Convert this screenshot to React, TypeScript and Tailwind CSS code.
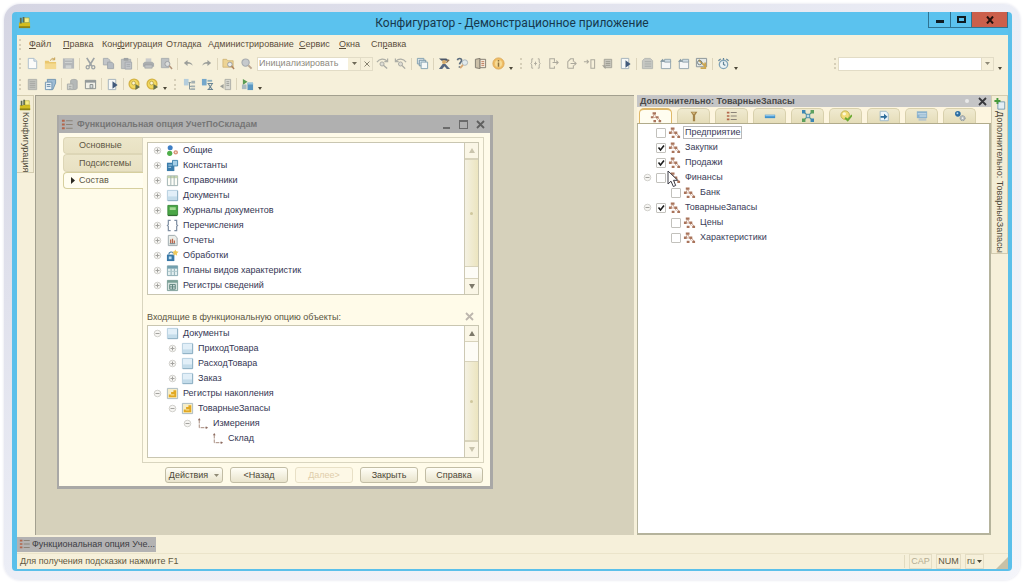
import { useState, type ReactNode } from "react";

const glyphs: Record<string, ReactNode> = {
  app: (
    <>
      <path d="M1 7h12v6H1z" fill="#d3bd1f" />
      <path d="M1 11h12v2H1z" fill="#8d8417" />
      <path d="M2 2h2v6H2zM5 1h2v6H5z" fill="#5a6a52" />
      <path d="M7 2h5v5H7z" fill="#f6ee8a" stroke="#a79a1d" strokeWidth=".6" />
    </>
  ),
  newDoc: (
    <>
      <path d="M2.500 1.500h6l3 3v8h-9z" fill="#fdfeff" stroke="#9fb4c8" />
      <path d="M8.500 1.500v3h3" fill="#dce8f2" stroke="#9fb4c8" />
    </>
  ),
  open: (
    <>
      <path d="M1 4h4l1 1.500h7V13H1z" fill="#e8c15c" />
      <path d="M1 7h12v6H1z" fill="#f4d682" />
      <path d="M7 4c1-3 3-3 4-1.500M11.500 .5v2.500H9" fill="none" stroke="#b98a2c" />
    </>
  ),
  save: (
    <>
      <path d="M1 1.500h12v11H1z" fill="#a9aeb4" />
      <path d="M3 2.500h8v4H3zM4 9h6v3.500H4z" fill="#c9cdd0" />
      <path d="M3 4.500h8" stroke="#949aa1" />
    </>
  ),
  cut: (
    <>
      <path d="M3 1l5.500 9M11 1L5.500 10" stroke="#8f979d" strokeWidth="1.800" />
      <circle cx="4" cy="11" r="1.700" fill="none" stroke="#8f979d" strokeWidth="1.400" />
      <circle cx="10" cy="11" r="1.700" fill="none" stroke="#8f979d" strokeWidth="1.400" />
    </>
  ),
  copy: (
    <>
      <path d="M1.500 1.500h5l2 2v5h-7z" fill="#b9bec6" stroke="#9ba2aa" />
      <path d="M6 5.500h4.500l2 2v5H6z" fill="#aab2bd" stroke="#9299a3" />
    </>
  ),
  paste: (
    <>
      <path d="M1.500 2.500h10v10h-10z" fill="#b4b8bd" stroke="#a0a5aa" />
      <path d="M4 1h5v3H4z" fill="#8f959b" />
      <path d="M5.500 5.500h7v7.500h-7z" fill="#b9bec6" stroke="#979da6" />
      <path d="M7 8h4M7 10h4" stroke="#979da6" />
    </>
  ),
  print: (
    <>
      <path d="M4 1.500h6V6H4z" fill="#c3c6ca" />
      <path d="M3 5h8l2 2v3.500H1V7z" fill="#9da2a8" />
      <path d="M3 8.500h8V12H3z" fill="#b7bbc0" stroke="#868c93" strokeWidth=".7" />
    </>
  ),
  preview: (
    <>
      <path d="M1.500 1.500h8v10h-8z" fill="#b4b9c0" stroke="#9da3a9" />
      <circle cx="8" cy="7.500" r="2.700" fill="#d7dadc" stroke="#8c9299" />
      <path d="M10 9.500l3 3.500" stroke="#a9876c" strokeWidth="1.600" />
    </>
  ),
  undo: (
    <path d="M2 6.500l4-3.200v2c3 0 5 1.200 5.500 4.200-1.500-1.800-3-2.200-5.500-2.100v2.300z" fill="#8c908f" />
  ),
  redo: (
    <path d="M12 6.500L8 3.300v2c-3 0-5 1.200-5.500 4.200C4 7.700 5.500 7.300 8 7.400v2.300z" fill="#8c908f" />
  ),
  findFolder: (
    <>
      <path d="M1 2.500h4l1 1.500h6v7H1z" fill="#ecd08a" stroke="#c5a35a" strokeWidth=".8" />
      <circle cx="8.500" cy="8" r="2.500" fill="#e9ecef" stroke="#8f8f8f" />
      <path d="M10.300 9.800l2.700 3" stroke="#a3714a" strokeWidth="1.600" />
    </>
  ),
  search: (
    <>
      <circle cx="6" cy="6" r="3.900" fill="#bec3ca" stroke="#9aa0a8" strokeWidth="1.200" />
      <path d="M9 9l3.500 3.500" stroke="#b09882" strokeWidth="2" />
    </>
  ),
  findNext: (
    <>
      <path d="M1 5.500C4 1.500 9 1.500 12 4.500M12.500 1.500v3.500H9" fill="none" stroke="#a1a39d" strokeWidth="1.300" />
      <circle cx="6.500" cy="7.500" r="2.200" fill="#d9d9d2" stroke="#9b9d99" />
      <path d="M8 9l4 3.500" stroke="#9b9d99" strokeWidth="1.400" />
    </>
  ),
  findPrev: (
    <>
      <path d="M13 5.500C10 1.500 5 1.500 2 4.500M1.500 1.500v3.500H5" fill="none" stroke="#a1a39d" strokeWidth="1.300" />
      <circle cx="7" cy="7.500" r="2.200" fill="#d9d9d2" stroke="#9b9d99" />
      <path d="M8.500 9l3.500 3.500" stroke="#9b9d99" strokeWidth="1.400" />
    </>
  ),
  windows: (
    <>
      <path d="M1.500 1.500h7v6h-7z" fill="#dfe9ef" stroke="#6f94aa" />
      <path d="M3.500 3.500h7v6h-7z" fill="#cfe2ee" stroke="#5b8097" />
      <path d="M5.500 5.500h7v7h-7z" fill="#f5fafd" stroke="#6f94aa" />
    </>
  ),
  syntax: (
    <>
      <path d="M1 1.500h8l3 2.500H4z" fill="#2f3d55" />
      <circle cx="6.500" cy="5.500" r="2.200" fill="#d3a25a" />
      <path d="M1 13l4-5.500h3l5 5.500h-3.500L7 10l-2.500 3z" fill="#3d5170" />
      <path d="M9 6l3-3" stroke="#7a5630" strokeWidth="1.300" />
    </>
  ),
  helpFind: (
    <>
      <path d="M1.500 3.500C2 1 6 1 6 3.500S4 5.500 3.800 8M3.800 10v1.500" fill="none" stroke="#41566f" strokeWidth="1.800" />
      <circle cx="9.500" cy="6" r="3" fill="#dfeaf0" stroke="#9aa9b3" />
      <path d="M7.500 8.500L4.500 12" stroke="#d39b60" strokeWidth="1.800" />
    </>
  ),
  book: (
    <>
      <path d="M1.500 2.500l5-1v11l-5-1z" fill="#c4b8a0" stroke="#6b665c" />
      <path d="M6.500 2.500h6v9h-6z" fill="#f4ead9" stroke="#6b665c" />
      <path d="M8 5h3M8 7h3M8 9h3" stroke="#b56646" />
    </>
  ),
  info: (
    <>
      <circle cx="7" cy="7" r="6" fill="#f0b652" stroke="#d79a3c" />
      <circle cx="7" cy="7" r="3.800" fill="#f8d888" />
      <path d="M7 6v4.500M7 3.200v1.600" stroke="#7b5a22" strokeWidth="1.600" />
    </>
  ),
  stepBraces: (
    <path d="M4.500 2H3v3.500L2 7l1 1.500V12h1.500M9.500 2H11v3.500L12 7l-1 1.500V12H9.500M7 5v4M5.500 7h3" fill="none" stroke="#a09d92" />
  ),
  stepOver: (
    <path d="M8 4V2H3v10h5v-2M8 5V2M6 6h6M10 4l2 2-2 2" fill="none" stroke="#a09d92" strokeWidth="1.100" />
  ),
  stepOut: (
    <path d="M3 12V5l3-3h3v3M3 12h6V9M6 7h6M10 5l2 2-2 2" fill="none" stroke="#a09d92" strokeWidth="1.100" />
  ),
  stepTo: (
    <path d="M1 5h5M4 3l2 2-2 2M8.500 3h4v9h-4z" fill="none" stroke="#a09d92" strokeWidth="1.100" />
  ),
  stack: (
    <>
      <path d="M3.500 2.500h8v9h-8z" fill="#c2c1b9" stroke="#97968e" />
      <path d="M5 5h5M5 7h5M5 9h5" stroke="#8b8a83" />
      <path d="M1 9h4v4z" fill="#97968e" />
    </>
  ),
  play: (
    <>
      <path d="M2.500 1.500h8v11h-8z" fill="#f7fafc" stroke="#93a6b6" />
      <path d="M7 3.500l5.500 4-5.500 4z" fill="#22406b" />
    </>
  ),
  table: (
    <>
      <path d="M4 1.500h6l2.500 2.500v8.500h-11V4z" fill="#bfc2c0" stroke="#a9adab" />
      <path d="M4 5h7M4 7.500h7M4 10h7" stroke="#9da2a2" />
    </>
  ),
  winBack: (
    <>
      <path d="M2.500 4.500h10v8h-10z" fill="#f5f9fb" stroke="#8197a5" />
      <path d="M6 2.500h6.500v3H6z" fill="#c9dae5" stroke="#8197a5" />
      <path d="M1 5l3-3 2 3" fill="#6d8798" />
    </>
  ),
  measure: (
    <>
      <path d="M1.500 1.500h11v9h-11z" fill="#e1e7e8" stroke="#75828a" />
      <path d="M4 3l8 8M11 6v6H6" fill="none" stroke="#c59a38" strokeWidth="2" />
      <circle cx="5" cy="6" r="2.300" fill="none" stroke="#596a72" />
    </>
  ),
  clock: (
    <>
      <circle cx="7" cy="8" r="4.500" fill="#eaf3f8" stroke="#6c96b2" strokeWidth="1.400" />
      <path d="M7 5v3l2 1M1.500 4l2.500-2M12.500 4L10 2M7 1v2" fill="none" stroke="#45708e" strokeWidth="1.300" />
    </>
  ),
  list: (
    <>
      <path d="M2.500 1.500h9v11h-9z" fill="#b9bcb9" stroke="#a3a7a5" />
      <path d="M4 4h6M4 6h6M4 8h6M4 10h6" stroke="#989d9b" />
    </>
  ),
  form: (
    <>
      <path d="M3.500 1.500h9v4l-3 7h-4z" fill="#8fb4d3" stroke="#5a86ab" />
      <path d="M1.500 4.500h7v8h-7z" fill="#e6f0f8" stroke="#5a86ab" />
      <path d="M3 7h4M3 9h4" stroke="#47749c" />
    </>
  ),
  dbBack: (
    <>
      <path d="M5 3c0-2 7-2 7 0v8c0 2-7 2-7 0z" fill="#a9afb2" stroke="#9a9fa0" />
      <path d="M1.500 6.500h6v6h-6z" fill="#cfd2d0" stroke="#9a9fa0" />
      <path d="M3 9h3M3 11h3" stroke="#8f9596" />
    </>
  ),
  formGray: (
    <>
      <path d="M1.500 2.500h11v9h-11z" fill="#f1f1ea" stroke="#757c7e" />
      <path d="M1 2.500h12v2.500H1z" fill="#828b90" />
      <path d="M6.500 7h3v4h-3z" fill="#cfd8dd" stroke="#757c7e" />
    </>
  ),
  goldPlay: (
    <>
      <circle cx="6.500" cy="6.500" r="5.300" fill="#f3d548" stroke="#cfa92a" strokeWidth="1.400" />
      <circle cx="6" cy="5.500" r="2" fill="#fdf7cf" stroke="#a48c24" strokeWidth=".8" />
      <path d="M8 6.500l5 3.300L8 13z" fill="#4f5b33" />
    </>
  ),
  treeBlue: (
    <>
      <path d="M1 1h5v7H1z" fill="#a9c8dd" />
      <path d="M6 5h3M7 5v7h3M7 9h3" fill="none" stroke="#68808c" />
      <path d="M9 3h4v3H9zM9 8h4v2H9zM9 11h4v2H9z" fill="#96a6ac" />
    </>
  ),
  treeBlue2: (
    <>
      <path d="M1 1h5v7H1z" fill="#5f9cc9" />
      <path d="M7 6h6M7 12.500h6M8 6.500l4 6M12 6.500l-4 6" fill="none" stroke="#527388" strokeWidth="1.100" />
      <path d="M7 2h5v2H7z" fill="#7da4b7" />
    </>
  ),
  back: (
    <>
      <path d="M6.500 1.500h6v11h-6z" fill="#d5d6d0" stroke="#a0a39f" />
      <path d="M8 4h3M8 6h3M8 8h3" stroke="#8d918e" />
      <path d="M1 9l4-2.500v5z" fill="#8d918e" />
    </>
  ),
  dbGreen: (
    <>
      <path d="M2 1l5 3-5 3.500z" fill="#3f8d3b" />
      <path d="M1 7h5v5H1z" fill="#9db1bd" />
      <path d="M7 5h6v8H7z" fill="#3f88bd" />
      <path d="M7 5h6v2H7z" fill="#8cc0e0" />
    </>
  ),
  options: (
    <>
      <path d="M1 2h3v2H1zM1 6h3v2H1zM1 10h3v2H1z" fill="#b3664b" />
      <path d="M5.500 3h7M5.500 7h7M5.500 11h7" stroke="#8b8378" strokeWidth="1.200" />
    </>
  ),
  common: (
    <>
      <circle cx="4.500" cy="4" r="2.700" fill="#3f7fc4" />
      <circle cx="4" cy="10" r="2.800" fill="#4fae4a" />
      <circle cx="10.500" cy="9" r="2.400" fill="#d89277" />
      <circle cx="10.500" cy="9" r="1" fill="#f6e3da" />
    </>
  ),
  constant: (
    <>
      <path d="M1 4h8v9H1z" fill="#3b7cab" />
      <path d="M2.500 6.500h5M2.500 9h3" stroke="#b6d9ee" />
      <path d="M7 1.500h5.500v6H7z" fill="#a6d0e8" stroke="#4385ae" />
    </>
  ),
  catalog: (
    <>
      <path d="M1.500 2h11v10.500h-11z" fill="#fdfdf7" stroke="#9db0b0" />
      <path d="M1.500 2h11v2.500h-11z" fill="#c5d3ae" />
      <path d="M5.200 2v10M8.800 2v10" stroke="#9db0b0" />
    </>
  ),
  document: (
    <>
      <path d="M1.500 1.500h11v11h-11z" fill="#e2eff8" stroke="#b3cddd" />
      <path d="M2 8h10v4H2z" fill="#c4dcea" />
      <path d="M12.500 2v10.500H2" fill="none" stroke="#8badc0" />
    </>
  ),
  journal: (
    <>
      <path d="M2 1.500h10.500V12H2z" fill="#4aa646" stroke="#3b8a3b" />
      <path d="M4 3.500h6.500v3H4z" fill="#a5d894" />
      <path d="M2 12.500h10" stroke="#245c26" />
    </>
  ),
  enumeration: (
    <path d="M5 1.500H2.500V6L1.500 7l1 1v4.500H5M9 1.500h2.500V6l1 1-1 1v4.500H9" fill="none" stroke="#7e8ea2" strokeWidth="1.300" />
  ),
  report: (
    <>
      <path d="M2.500 1.500h7l2.500 2.500v8.500H2.500z" fill="#eceee9" stroke="#9ca8ac" />
      <path d="M5 10V6M7 10V5M9 10V7" stroke="#b7664d" strokeWidth="1.300" />
      <path d="M4 10.500h6" stroke="#5e7480" />
    </>
  ),
  processing: (
    <>
      <path d="M1 6h8v7H1z" fill="#3878a8" />
      <path d="M3 8h3v3H3z" fill="#b7dcf2" />
      <path d="M3 6c0-3 4-4 5-1" fill="none" stroke="#447ca2" strokeWidth="1.200" />
      <path d="M10 .5l1 2 2.500.5-1.800 1.800.3 2.400L10 6l-2 1 .3-2.200L6.800 3l2.200-.5z" fill="#f0c95a" />
    </>
  ),
  plan: (
    <>
      <path d="M1.500 2h11v10.500h-11z" fill="#e3eff0" stroke="#86a8b0" />
      <path d="M1.500 2h11v3h-11z" fill="#73a0ae" />
      <path d="M5.500 5v7M9 5v7" stroke="#86a8b0" />
      <path d="M2 8h10" stroke="#b0c8cc" />
    </>
  ),
  register: (
    <>
      <path d="M1.500 1.500h11v11h-11z" fill="#d5e2de" stroke="#7b9d96" />
      <path d="M1.500 1.500h11v2.500h-11z" fill="#7ba197" />
      <path d="M4 6h6v5H4zM7 6v5M4 8.500h6" fill="none" stroke="#5d837c" />
    </>
  ),
  accumulation: (
    <>
      <path d="M1.500 1.500h11v11h-11z" fill="#f6edc8" stroke="#a9bac0" />
      <path d="M3 11V8h2.500V5.500H8V3.500h3V11z" fill="#e2a923" />
      <path d="M5 8.500h4" stroke="#fff0b5" />
    </>
  ),
  dimension: (
    <>
      <path d="M3.500 3v8.500H12" fill="none" stroke="#a08274" strokeWidth="1" strokeDasharray="4 1" />
      <path d="M2 3.500L3.500 1 5 3.500zM10.500 10L13 11.500 10.500 13z" fill="#8d6b60" />
    </>
  ),
  subsystem: (
    <>
      <path d="M5 3.500l4 7M4.500 4l-1 3M4 7.500h4M8.500 7L12 11" fill="none" stroke="#c9a08c" />
      <path d="M3 1.500h4v2.500H3zM1 6h3v2.500H1zM7 6h3v2.500H7zM4 10.500h3V13H4zM10 10.500h3V13h-3z" fill="#a9745b" />
    </>
  ),
  filter: (
    <>
      <path d="M3 2h8L8.300 6v7H5.700V6z" fill="#a58449" />
      <path d="M4.500 3h4L7 5z" fill="#e0c58a" />
    </>
  ),
  minus: (
    <>
      <path d="M1 5.500h12v4H1z" fill="#3e91cc" />
      <path d="M1.500 6h11v1.300h-11z" fill="#9ed0ef" />
    </>
  ),
  network: (
    <>
      <path d="M3 3l8 8M11 3l-8 8" stroke="#4f8f89" strokeWidth="1.200" />
      <path d="M0 0h4v4H0zM10 10h4v4h-4z" fill="#3c86b5" />
      <path d="M10 0h4v4h-4zM0 10h4v4H0z" fill="#5ca05e" />
      <path d="M5 5h4v4H5z" fill="#bddbe4" stroke="#4386a6" />
    </>
  ),
  globe: (
    <>
      <circle cx="6" cy="6" r="5" fill="#f2dc78" stroke="#bcae4d" />
      <circle cx="5" cy="4.500" r="2" fill="#fdf8d5" />
      <path d="M6 9l3 3 5-6" fill="none" stroke="#6caa32" strokeWidth="2.200" />
    </>
  ),
  docArrow: (
    <>
      <path d="M2.500 1.500h7l2.500 3v8H2.500z" fill="#eef5f9" stroke="#98b4c4" />
      <path d="M3 7h4V4.500L11 8l-4 3.500V9H3z" fill="#2d6c9b" />
    </>
  ),
  panel: (
    <>
      <path d="M1 1.500h12v8H1z" fill="#8bb2cd" />
      <path d="M2 4.500h10M4 7h8" stroke="#e4eff5" />
      <path d="M3 9.500h9v3H3z" fill="#b9c6cb" />
    </>
  ),
  gears: (
    <>
      <circle cx="4.500" cy="4.500" r="3.300" fill="#2e6ea2" />
      <circle cx="4" cy="3.800" r="1.100" fill="#b7daf0" />
      <circle cx="10" cy="9.500" r="3" fill="#b3b9bb" stroke="#889197" strokeDasharray="1.500 1" />
      <circle cx="10" cy="9.500" r="1" fill="#f3f3ee" />
    </>
  ),
  addPage: (
    <>
      <path d="M4.500 4.500h8v8.500h-8z" fill="#e3eef4" stroke="#6c93ab" />
      <path d="M4 0v7M.5 3.500h7" stroke="#459a3c" strokeWidth="2.200" />
    </>
  ),
};

function Icon({ name, small = false }: { name: string; small?: boolean }) {
  return (
    <svg viewBox="0 0 14 14" aria-hidden="true" className={small ? "h-3 w-3 shrink-0" : "h-[13px] w-[13px] shrink-0"}>
      {glyphs[name]}
    </svg>
  );
}

function Tool({ name, label }: { name: string; label: string }) {
  return (
    <button type="button" aria-label={label} className="flex h-[18px] w-[18px] shrink-0 items-center justify-center opacity-85">
      <Icon name={name} />
    </button>
  );
}

const Sep = () => (
  <span className="flex w-1 shrink-0 justify-center">
    <span className="h-3 w-px bg-[#dcd4bb]" />
  </span>
);

const Grip = ({ wide = false }: { wide?: boolean }) => (
  <span className={wide ? "flex w-[11px] shrink-0 justify-end pr-1" : "flex w-[6px] shrink-0 justify-center"}>
    <span className="h-[11px] border-l-2 border-dotted border-[#d6cfb8]" />
  </span>
);

const More = () => (
  <button type="button" aria-label="Другие кнопки" className="flex h-[12px] w-2 shrink-0 items-end justify-center">
    <svg viewBox="0 0 4 3" className="h-[3px] w-1" aria-hidden="true">
      <path d="M0 0h4L2 3z" fill="#4d4838" />
    </svg>
  </button>
);

type Entry = string | [string, string];

function Tools({ items }: { items: Entry[] }) {
  return (
    <>
      {items.map((item, i) =>
        item === "|" ? (
          <Sep key={i} />
        ) : item === "." ? (
          <More key={i} />
        ) : item === ":" ? (
          <Grip key={i} wide />
        ) : (
          <Tool key={i} name={item[0]} label={item[1]} />
        ),
      )}
    </>
  );
}

const fileTools: Entry[] = [
  ["newDoc", "Новый"], ["open", "Открыть"], ["save", "Сохранить"], "|",
  ["cut", "Вырезать"], ["copy", "Копировать"], ["paste", "Вставить"], "|",
  ["print", "Печать"], ["preview", "Просмотр"], "|",
  ["undo", "Отменить"], ["redo", "Вернуть"], "|",
  ["findFolder", "Глобальный поиск"], ["search", "Найти"],
];

const debugTools: Entry[] = [
  ["findNext", "Найти следующий"], ["findPrev", "Найти предыдущий"], "|",
  ["windows", "Окна"], "|",
  ["syntax", "Синтаксис-помощник"], ["helpFind", "Поиск в справке"], ["book", "Справка"], ["info", "О программе"], ".", ":",
  ["stepBraces", "Шагнуть в"], ["stepOver", "Шагнуть через"], ["stepOut", "Шагнуть из"], ["stepTo", "Идти до курсора"],
  ["stack", "Стек вызовов"], ["play", "Продолжить"], "|",
  ["table", "Табло"], ["winBack", "Назад"], ["winBack", "Вперёд"], ["measure", "Замер"], "|", ["clock", "Время"], ".",
];

const configTools: Entry[] = [
  ["list", "Список"], ["form", "Форма"], "|",
  ["dbBack", "База данных"], ["formGray", "Окно"], "|",
  ["play", "Запуск"], "|",
  ["goldPlay", "Отладка"], ["goldPlay", "Предприятие"], ".", ":",
  ["treeBlue", "Конфигурация"], ["treeBlue2", "Закрыть конфигурацию"], ["back", "Вернуться"], "|",
  ["dbGreen", "Обновить базу данных"], ".",
];

const menu: [string, string, string, string][] = [
  ["", "Ф", "айл", "w-[34px]"],
  ["", "П", "равка", "w-[39px]"],
  ["Кон", "ф", "игурация", "w-[64px]"],
  ["Отладка", "", "", "w-[42px]"],
  ["Администрирование", "", "", "w-[91px]"],
  ["", "С", "ервис", "w-[40px]"],
  ["", "О", "кна", "w-[32px]"],
  ["Сп", "р", "авка", "w-[40px]"],
];

const indents = ["pl-0", "pl-[15px]", "pl-[30px]", "pl-[45px]"];

function Expander({ sign, label }: { sign?: "+" | "-"; label: string }) {
  if (!sign) return <span className="w-[9px] shrink-0" />;
  return (
    <button type="button" aria-label={label} className="h-[9px] w-[9px] shrink-0">
      <svg viewBox="0 0 9 9" className="h-[9px] w-[9px]" aria-hidden="true">
        <circle cx="4.500" cy="4.500" r="3.300" fill="#f6f5f2" stroke="#d2d1cd" />
        <path d={sign === "+" ? "M2.500 4.500h4M4.500 2.500v4" : "M2.500 4.500h4"} stroke="#a3a29f" />
      </svg>
    </button>
  );
}

type Row = { text: string; icon: string; level: number; sign?: "+" | "-" };

function ObjectTree({ rows }: { rows: Row[] }) {
  return (
    <ul className="min-w-0 flex-1 overflow-hidden pl-[5px]">
      {rows.map((r) => (
        <li key={r.text} className={"flex h-[15px] items-center whitespace-nowrap text-[#343653] " + indents[r.level]}>
          <Expander sign={r.sign} label={r.text} />
          <span className="ml-1 flex w-[17px] shrink-0 items-center">
            <Icon name={r.icon} />
          </span>
          {r.text}
        </li>
      ))}
    </ul>
  );
}

const objects: Row[] = [
  { text: "Общие", icon: "common", level: 0, sign: "+" },
  { text: "Константы", icon: "constant", level: 0, sign: "+" },
  { text: "Справочники", icon: "catalog", level: 0, sign: "+" },
  { text: "Документы", icon: "document", level: 0, sign: "+" },
  { text: "Журналы документов", icon: "journal", level: 0, sign: "+" },
  { text: "Перечисления", icon: "enumeration", level: 0, sign: "+" },
  { text: "Отчеты", icon: "report", level: 0, sign: "+" },
  { text: "Обработки", icon: "processing", level: 0, sign: "+" },
  { text: "Планы видов характеристик", icon: "plan", level: 0, sign: "+" },
  { text: "Регистры сведений", icon: "register", level: 0, sign: "+" },
];

const included: Row[] = [
  { text: "Документы", icon: "document", level: 0, sign: "-" },
  { text: "ПриходТовара", icon: "document", level: 1, sign: "+" },
  { text: "РасходТовара", icon: "document", level: 1, sign: "+" },
  { text: "Заказ", icon: "document", level: 1, sign: "+" },
  { text: "Регистры накопления", icon: "accumulation", level: 0, sign: "-" },
  { text: "ТоварныеЗапасы", icon: "accumulation", level: 1, sign: "-" },
  { text: "Измерения", icon: "dimension", level: 2, sign: "-" },
  { text: "Склад", icon: "dimension", level: 3 },
];

function Arrow({ up = false, muted = false }: { up?: boolean; muted?: boolean }) {
  return (
    <svg viewBox="0 0 6 5" className="h-[5px] w-[6px]" aria-hidden="true">
      <path d={up ? "M0 5h6L3 0z" : "M0 0h6L3 5z"} fill={muted ? "#c9c4ad" : "#7d796a"} />
    </svg>
  );
}

function ScrollBar({ atEnd }: { atEnd: boolean }) {
  const gap = <span className={atEnd ? "h-[11px] bg-[#fdfcf6]" : "h-[19px] bg-[#fdfcf6]"} />;
  return (
    <div className="flex w-[14px] shrink-0 flex-col border-l border-[#cdc9b4]">
      <button type="button" aria-label="Вверх" className="flex h-4 items-center justify-center border-b border-[#d8d3bb] bg-[#faf6e6]">
        <Arrow up muted={atEnd} />
      </button>
      {!atEnd && gap}
      <span className="flex flex-1 items-center justify-center border-y border-[#d8d3bb] bg-linear-to-r from-[#f4f1e2] to-[#ece5bf]">
        <span className="h-[3px] w-[3px] rounded-full bg-[#cfc79d]" />
      </span>
      {atEnd && gap}
      <button type="button" aria-label="Вниз" className="flex h-4 items-center justify-center border-t border-[#d8d3bb] bg-[#faf6e6]">
        <Arrow muted={!atEnd} />
      </button>
    </div>
  );
}

const Cross = ({ tone }: { tone: string }) => (
  <svg viewBox="0 0 9 9" className={"h-[9px] w-[9px] " + tone} aria-hidden="true">
    <path d="M1 1l7 7M8 1L1 8" stroke="currentColor" strokeWidth="1.800" />
  </svg>
);

const buttonBase = "flex h-4 w-[58px] items-center justify-center rounded-[3px] border ";

function DialogButton({ text, off = false, menu = false }: { text: string; off?: boolean; menu?: boolean }) {
  return (
    <button
      type="button"
      disabled={off}
      className={
        buttonBase +
        (off
          ? "border-[#e8e0c6] bg-[#fdf8e6] text-[#dfcdaa]"
          : "border-[#c2bda5] bg-linear-to-b from-[#fffef6] to-[#e9e4cd] text-[#4d4736]")
      }
    >
      {text}
      {menu && (
        <svg viewBox="0 0 5 3" className="ml-[6px] h-[3px] w-[5px]" aria-hidden="true">
          <path d="M0 0h5L2.500 3z" fill="#8f8a75" />
        </svg>
      )}
    </button>
  );
}

function OptionWindow() {
  return (
    <section className="absolute top-[19px] left-[21px] flex w-[436px] flex-col border-r-[3px] border-b-[3px] border-l-2 border-[#a9a8a6] bg-[#fffbe9]">
      <header className="flex h-[18px] items-center bg-[#b0b0b0] pr-[5px] pl-[2px]">
        <Icon name="options" />
        <h2 className="ml-[3px] flex-1 text-[9px] font-bold text-[#767676]">Функциональная опция УчетПоСкладам</h2>
        <button type="button" aria-label="Свернуть" className="mr-[9px] flex h-[9px] w-[7px] items-end">
          <span className="h-[2px] w-[7px] bg-[#6b6b6b]" />
        </button>
        <button type="button" aria-label="Развернуть" className="mr-[8px] h-[9px] w-[9px] border border-t-2 border-[#6b6b6b]" />
        <button type="button" aria-label="Закрыть окно">
          <Cross tone="text-[#5f5f5f]" />
        </button>
      </header>
      <div className="flex pt-[4px] pr-[6px] pl-[4px]">
        <nav className="flex w-[79px] shrink-0 flex-col text-[#5d5643]">
          <button type="button" className="h-[17px] rounded-l-[4px] border border-r-0 border-[#ddd6b6] bg-linear-to-b from-[#ece6ca] to-[#e8e1c2] pl-[15px] text-left">
            Основные
          </button>
          <button type="button" className="h-[18px] rounded-l-[4px] border border-r-0 border-[#ddd6b6] bg-linear-to-b from-[#ece6ca] to-[#e8e1c2] pl-[15px] text-left">
            Подсистемы
          </button>
          <button type="button" className="z-10 -mr-px flex h-[17px] items-center rounded-l-[4px] border border-r-0 border-[#d6cf9f] bg-[#fffdf0] pl-[7px]">
            <svg viewBox="0 0 4 7" className="mr-1 h-[7px] w-1" aria-hidden="true">
              <path d="M0 0v7l4-3.500z" fill="#2c2a22" />
            </svg>
            Состав
          </button>
        </nav>
        <div className="flex min-w-0 flex-1 flex-col border border-[#d9d5bf] p-1">
          <div className="flex h-[153px] border border-[#c9c6b1] bg-white">
            <ObjectTree rows={objects} />
            <ScrollBar atEnd />
          </div>
          <div className="flex h-[30px] items-end justify-between pr-[5px] pb-[2px] text-[#5a5441]">
            <h3 className="leading-[11px]">Входящие в функциональную опцию объекты:</h3>
            <button type="button" aria-label="Убрать объект" className="pb-[2px]">
              <Cross tone="text-[#bdb6ae]" />
            </button>
          </div>
          <div className="flex h-[133px] border border-[#c9c6b1] bg-white">
            <ObjectTree rows={included} />
            <ScrollBar atEnd={false} />
          </div>
        </div>
      </div>
      <footer className="flex justify-end gap-[7px] pt-[4px] pr-[7px] pb-[3px]">
        <DialogButton text="Действия" menu />
        <DialogButton text="<Назад" />
        <DialogButton text="Далее>" off />
        <DialogButton text="Закрыть" />
        <DialogButton text="Справка" />
      </footer>
    </section>
  );
}

const panelTabs: [string, string][] = [
  ["subsystem", "Подсистемы"], ["filter", "Отбор"], ["options", "Функциональные опции"],
  ["minus", "Реквизиты"], ["network", "Планы обмена"], ["globe", "Права"],
  ["docArrow", "Ввод на основании"], ["panel", "Командный интерфейс"], ["gears", "Регламент"],
];

type Subsystem = { text: string; level: number; checked: boolean; open?: boolean };

const subsystems: Subsystem[] = [
  { text: "Предприятие", level: 0, checked: false },
  { text: "Закупки", level: 0, checked: true },
  { text: "Продажи", level: 0, checked: true },
  { text: "Финансы", level: 0, checked: false, open: true },
  { text: "Банк", level: 1, checked: false },
  { text: "ТоварныеЗапасы", level: 0, checked: true, open: true },
  { text: "Цены", level: 1, checked: false },
  { text: "Характеристики", level: 1, checked: false },
];

function SubsystemRow({ item, first }: { item: Subsystem; first: boolean }) {
  const [on, setOn] = useState(item.checked);
  return (
    <li className={"relative flex h-[15px] items-center " + indents[item.level]}>
      <Expander sign={item.open ? "-" : undefined} label={item.text} />
      <label className="ml-1 flex items-center whitespace-nowrap text-[#3a3c58]">
        <span className="relative h-[10px] w-[10px]">
          <input
            type="checkbox"
            checked={on}
            onChange={() => setOn(!on)}
            className="block h-[10px] w-[10px] appearance-none rounded-[1px] border border-[#c2c1bc] bg-white"
          />
          {on && (
            <svg viewBox="0 0 10 10" className="pointer-events-none absolute inset-0" aria-hidden="true">
              <path d="M2.500 4.500l2 2.500 3.500-4.500" fill="none" stroke="#1d1d1d" strokeWidth="1.600" />
            </svg>
          )}
        </span>
        <span className="ml-[2px] flex w-[15px] items-center">
          <Icon name="subsystem" />
        </span>
        <span className={first ? "border border-[#b9b9b9] px-px leading-[11px]" : "px-[2px]"}>{item.text}</span>
      </label>
      {item.text === "Финансы" && (
        <svg viewBox="0 0 12 18" className="pointer-events-none absolute top-0 left-[24px] z-10 h-[18px] w-3" aria-hidden="true">
          <path d="M1 1v13l3-2.800 2.300 5.300 2.400-1L6.500 10.300h4.200z" fill="#fff" stroke="#3b3b44" />
        </svg>
      )}
    </li>
  );
}

function SidePanel() {
  return (
    <aside className="flex w-[354px] shrink-0 flex-col bg-[#fdf5df]">
      <header className="flex h-[12px] items-center bg-[#c5c5c6] pr-[4px] pl-[3px]">
        <h2 className="flex-1 leading-[12px] font-bold text-[#494949]">Дополнительно: ТоварныеЗапасы</h2>
        <span className="mr-[9px] h-1 w-1 rounded-full bg-[#e9e9e9]" />
        <button type="button" aria-label="Закрыть панель">
          <Cross tone="text-[#38383c]" />
        </button>
      </header>
      <nav className="flex gap-[5px] border-b border-[#b1ab8b] pt-px pl-[2px]">
        {panelTabs.map(([icon, label], i) => (
          <button
            key={icon}
            type="button"
            aria-label={label}
            className={
              "flex h-[15px] w-[33px] items-center justify-center rounded-t-[5px] border border-b-0 " +
              (i === 0 ? "border-[#dfb869] border-t-2 bg-[#fffdf0]" : "border-[#d8d0ac] bg-linear-to-b from-[#f0ead0] to-[#e5ddb9]")
            }
          >
            <Icon name={icon} small />
          </button>
        ))}
      </nav>
      <ul className="flex-1 border-r-2 border-b-2 border-l border-[#b5b39c] bg-white pt-px pl-[5px]">
        {subsystems.map((s, i) => (
          <SubsystemRow key={s.text} item={s} first={i === 0} />
        ))}
      </ul>
    </aside>
  );
}

export default function App() {
  const [command, setCommand] = useState("Инициализировать");
  const [query, setQuery] = useState("");
  return (
    <div className="flex min-h-screen bg-white p-1 pb-2 font-['Liberation_Sans',Arial,sans-serif] text-[9px] leading-[13px] text-[#5a5340]">
      <div className="flex flex-1 rounded-[16px] bg-linear-to-br from-[#d5d5e3] via-[#eceef6] to-[#f4f5fa] p-2 pb-[9px] shadow-[0_0_3px_#dcdde9]">
        <main className="flex min-w-0 flex-1 flex-col rounded-[4px] border-r-[4px] border-b-2 border-l-[5px] border-[#5bc0ea] bg-[#f6f0da]">
          <header className="flex h-[23px] items-start bg-[#5bc2ee]">
            <span className="mt-1 ml-px">
              <Icon name="app" />
            </span>
            <h1 className="flex-1 pl-[65px] text-center font-[Roboto,'Open_Sans',sans-serif] text-[12px] leading-[22px] text-[#17384c]">
              Конфигуратор - Демонстрационное приложение
            </h1>
            <div className="flex h-4 border border-t-0 border-[#2f7391] text-[#101c22]">
              <button type="button" aria-label="Свернуть приложение" className="flex w-[21px] items-center justify-center">
                <span className="mt-1 h-[3px] w-2 bg-[#101c22]" />
              </button>
              <button type="button" aria-label="Развернуть приложение" className="flex w-[21px] items-center justify-center border-l border-[#2f7391]">
                <span className="h-[7px] w-[9px] border-2 border-[#101c22]" />
              </button>
              <button type="button" aria-label="Закрыть приложение" className="flex w-[36px] items-center justify-center border-l border-[#2f7391] bg-[#cb5f4b]">
                <svg viewBox="0 0 8 8" className="h-2 w-2" aria-hidden="true">
                  <path d="M1 .5l6 7M7 .5l-6 7" stroke="#26110d" strokeWidth="2" />
                </svg>
              </button>
            </div>
          </header>

          <nav className="flex h-[19px] items-center text-[#5b4d3a]">
            <Grip />
            <ul className="flex pl-[6px]">
              {menu.map(([before, key, after, width]) => (
                <li key={before + key + after} className={width}>
                  <button type="button" className="whitespace-nowrap">
                    {before}
                    {key && <span className="underline">{key}</span>}
                    {after}
                  </button>
                </li>
              ))}
            </ul>
          </nav>

          <div className="flex h-[19px] items-center">
            <Grip />
            <Tools items={fileTools} />
            <div className="ml-[2px] flex h-[14px] w-[116px] shrink-0 border border-[#e2dcc6] bg-white">
              <input
                aria-label="Процедура"
                value={command}
                onChange={(e) => setCommand(e.target.value)}
                className="min-w-0 flex-1 pl-px text-[#8e8a80] outline-none"
              />
              <button type="button" aria-label="Выбрать процедуру" className="flex w-3 items-center justify-center bg-[#f6f0da]">
                <svg viewBox="0 0 5 3" className="h-[3px] w-[5px]" aria-hidden="true">
                  <path d="M0 0h5L2.500 3z" fill="#6e6957" />
                </svg>
              </button>
              <button type="button" aria-label="Очистить" className="flex w-3 items-center justify-center border-l border-[#e2dcc6] bg-[#f6f0da]">
                <svg viewBox="0 0 6 6" className="h-[6px] w-[6px]" aria-hidden="true">
                  <path d="M.5 .5l5 5M5.500 .5l-5 5" stroke="#87826f" />
                </svg>
              </button>
            </div>
            <Tools items={debugTools} />
            <span className="flex-1" />
            <Grip />
            <div className="flex h-[14px] w-[156px] shrink-0 border border-[#e2dcc6] bg-white">
              <input
                aria-label="Поиск"
                value={query}
                onChange={(e) => setQuery(e.target.value)}
                className="min-w-0 flex-1 outline-none"
              />
              <button type="button" aria-label="Выбрать запрос" className="flex w-3 items-center justify-center border-l border-[#e2dcc6] bg-[#f6f0da]">
                <svg viewBox="0 0 5 3" className="h-[3px] w-[5px]" aria-hidden="true">
                  <path d="M0 0h5L2.500 3z" fill="#8e8977" />
                </svg>
              </button>
            </div>
            <span className="pr-1 pl-[2px]">
              <More />
            </span>
          </div>

          <div className="flex h-[22px] items-center">
            <Grip />
            <Tools items={configTools} />
          </div>

          <div className="flex flex-1">
            <div className="w-[18px] shrink-0">
              <button type="button" className="flex h-[78px] w-[17px] flex-col items-center border border-l-0 border-[#d3ccb0] bg-[#f3edd5] pt-[3px] text-[#4d4838]">
                <Icon name="app" small />
                <span className="mt-px leading-[13px] [writing-mode:vertical-rl]">Конфигурация</span>
              </button>
            </div>
            <div className="relative flex-1 border-t border-l border-[#a3a08f] bg-[#d6d1bb]">
              <OptionWindow />
            </div>
            <span className="w-[3px] shrink-0" />
            <SidePanel />
            <div className="w-[17px] shrink-0">
              <button type="button" className="flex h-[159px] w-[17px] flex-col items-center border border-[#d3ccb0] bg-[#f3edd5] pt-[2px] text-[#4d4838]">
                <Icon name="addPage" small />
                <span className="mt-px leading-[13px] whitespace-nowrap [writing-mode:vertical-rl]">Дополнительно: ТоварныеЗапасы</span>
              </button>
            </div>
          </div>

          <div className="flex h-[18px] items-center">
            <button type="button" className="flex h-[15px] items-center gap-px bg-[#b3b2b2] pr-px pl-[2px] whitespace-nowrap text-[#3c3c42]">
              <Icon name="options" small />
              <span>Функциональная опция Уче...</span>
            </button>
          </div>

          <footer className="flex h-[16px] items-center gap-1 border-t border-[#ebe4ca] text-[#5f583f]">
            <p className="flex-1 border-r border-[#e2dbc0] pl-[3px]">Для получения подсказки нажмите F1</p>
            <span className="w-[23px] border border-[#e4ddc4] text-center text-[#b4ad92]">CAP</span>
            <span className="w-[25px] border border-[#e4ddc4] text-center">NUM</span>
            <button type="button" className="flex h-[15px] w-[19px] items-center justify-center gap-[2px] border border-[#e4ddc4]">
              ru
              <svg viewBox="0 0 5 3" className="h-[3px] w-[5px]" aria-hidden="true">
                <path d="M0 0h5L2.500 3z" fill="#4b4634" />
              </svg>
            </button>
            <svg viewBox="0 0 12 12" className="ml-2 h-3 w-3 self-end" aria-hidden="true">
              <path d="M12 0v12H0z" fill="#c8c1a6" />
            </svg>
          </footer>
        </main>
      </div>
    </div>
  );
}
